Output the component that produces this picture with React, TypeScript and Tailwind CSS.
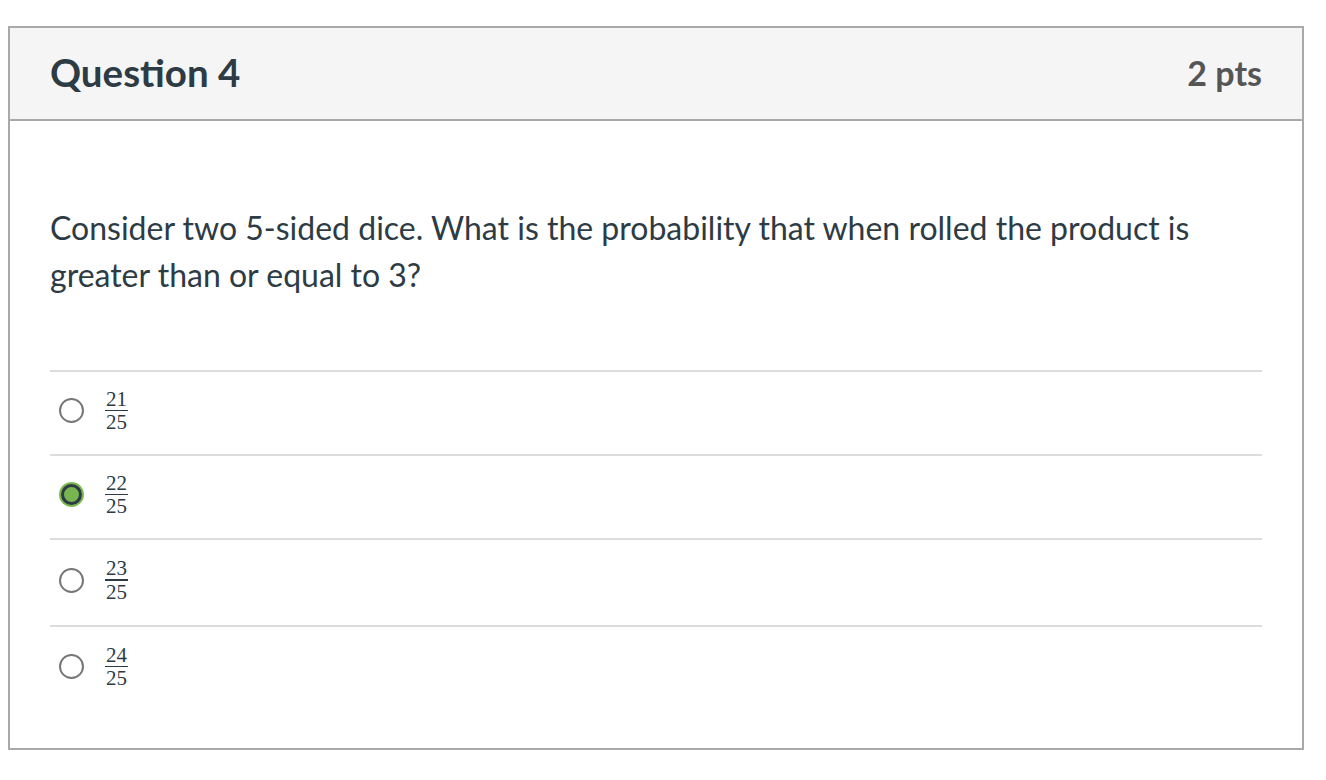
import React from "react";

const answers = [
  { num: "21", den: "25", selected: false, h: "h-[84px]" },
  { num: "22", den: "25", selected: true, h: "h-[84px]" },
  { num: "23", den: "25", selected: false, h: "h-[87px]" },
  { num: "24", den: "25", selected: false, h: "h-[84px]" },
];

function Radio({ selected }: { selected: boolean }) {
  if (selected) {
    return (
      <span className="flex h-[25px] w-[25px] items-center justify-center rounded-full bg-[#7cb94f]">
        <span className="h-[21px] w-[21px] rounded-full border-[3px] border-[#2d3b45] bg-[#77b551]" />
      </span>
    );
  }
  return <span className="h-[25px] w-[25px] rounded-full border-2 border-[#777] bg-white" />;
}

function Fraction({ num, den }: { num: string; den: string }) {
  return (
    <span
      className="inline-flex flex-col items-center text-[21px] leading-[22px] text-[#2d3b45]"
      style={{ fontFamily: "'Liberation Serif', 'DejaVu Serif', serif" }}
    >
      <span className="px-[1px]">{num}</span>
      <span className="h-[1.5px] w-full bg-[#2d3b45]" />
      <span className="px-[1px]">{den}</span>
    </span>
  );
}

export default function App() {
  return (
    <div className="min-h-[780px] bg-white pl-[8px] pt-[26px] font-['Lato',sans-serif]">
      <div className="w-[1296px] h-[724px] border-2 border-[#a9a9a9] bg-white">
        {/* header */}
        <div className="flex h-[93px] items-center justify-between border-b-2 border-[#a9a9a9] bg-[#f5f5f5] px-[40px] pb-[2px]">
          <h2 className="text-[38.5px] font-bold text-[#2d3b45]">Question 4</h2>
          <span className="text-[34px] font-bold text-[#555]">2 pts</span>
        </div>

        {/* body */}
        <div className="px-[40px] pt-[83px]">
          <p className="text-[32px] leading-[47px] text-[#2d3b45]">
            Consider two 5-sided dice. What is the probability that when rolled the product is greater than or equal to 3?
          </p>

          <div className="mt-[72px] border-t-2 border-[#dcdcdc]">
            {answers.map((a, i) => (
              <div
                key={a.num}
                className={
                  "flex items-center gap-[21px] pb-[5px] pl-[9px] " +
                  a.h +
                  (i < answers.length - 1 ? " border-b-2 border-[#dcdcdc]" : "")
                }
              >
                <Radio selected={a.selected} />
                <Fraction num={a.num} den={a.den} />
              </div>
            ))}
          </div>
        </div>
      </div>
    </div>
  );
}
